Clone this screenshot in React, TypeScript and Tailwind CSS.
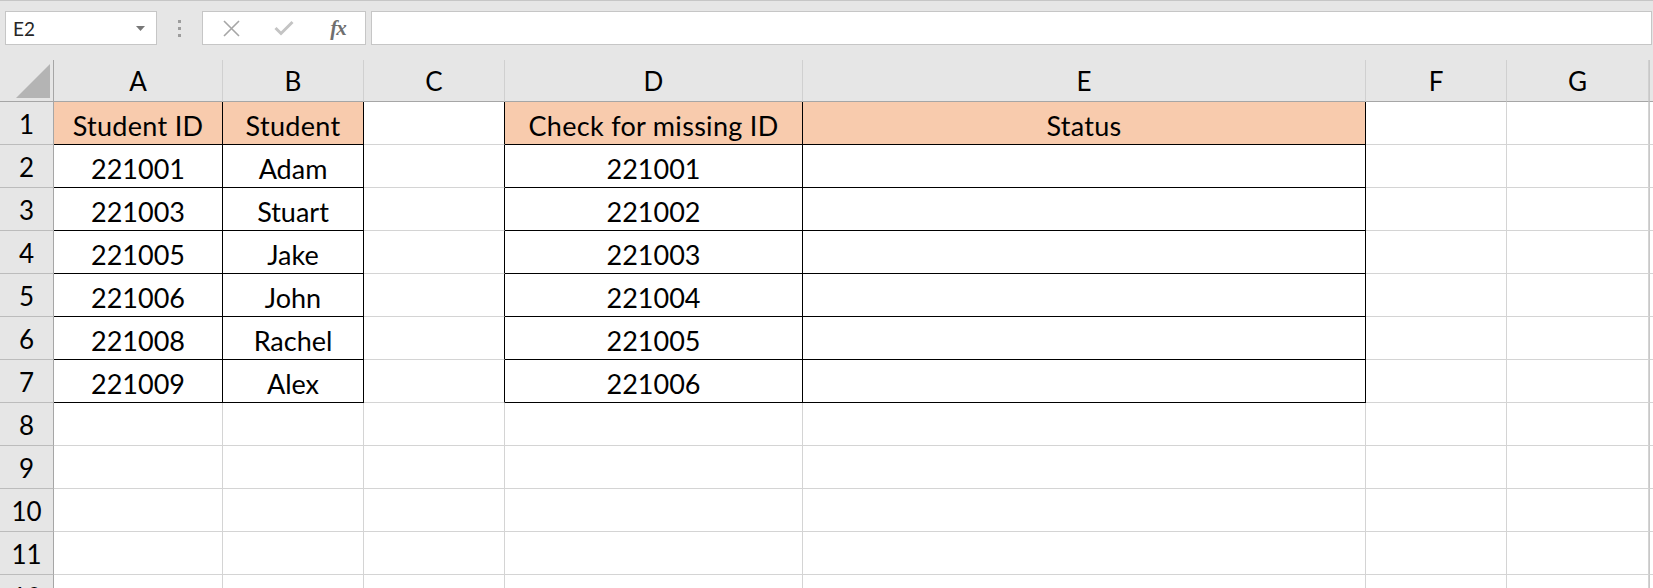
import React from 'react'

const COLS = ['A', 'B', 'C', 'D', 'E', 'F', 'G']
const ROWS = [1, 2, 3, 4, 5, 6, 7, 8, 9, 10, 11, 12]

const students: [string, string][] = [
  ['221001', 'Adam'],
  ['221003', 'Stuart'],
  ['221005', 'Jake'],
  ['221006', 'John'],
  ['221008', 'Rachel'],
  ['221009', 'Alex'],
]
const checkIds = ['221001', '221002', '221003', '221004', '221005', '221006']

function cellValue(col: string, row: number): string {
  if (row === 1) {
    if (col === 'A') return 'Student ID'
    if (col === 'B') return 'Student'
    if (col === 'D') return 'Check for missing ID'
    if (col === 'E') return 'Status'
    return ''
  }
  const i = row - 2
  if (i < 0 || i > 5) return ''
  if (col === 'A') return students[i][0]
  if (col === 'B') return students[i][1]
  if (col === 'D') return checkIds[i]
  return ''
}

function inTable(col: string, row: number) {
  return row >= 1 && row <= 7 && (col === 'A' || col === 'B' || col === 'D' || col === 'E')
}

function Toolbar() {
  return (
    <div className="h-[60px] bg-[#e6e6e6] border-t border-[#c6c6c6] flex items-start pt-[10px] pl-[5px] pr-[1px]">
      {/* name box */}
      <div className="w-[152px] h-[34px] bg-white border border-[#c6c6c6] flex items-center justify-between pl-[7px] pr-[11px]">
        <span className="text-[19px] text-[#262626] leading-none">E2</span>
        <svg width="9" height="5" viewBox="0 0 9 5">
          <path d="M0 0 L9 0 L4.5 5 Z" fill="#777" />
        </svg>
      </div>
      {/* dots */}
      <div className="w-[45px] h-[34px] flex flex-col items-center justify-center gap-[4px]">
        <div className="w-[3px] h-[3px] bg-[#9d9d9d]" />
        <div className="w-[3px] h-[3px] bg-[#9d9d9d]" />
        <div className="w-[3px] h-[3px] bg-[#9d9d9d]" />
      </div>
      {/* formula icons */}
      <div className="w-[164px] h-[34px] bg-white border border-[#c6c6c6] flex items-center">
        <div className="w-[54px] flex justify-center pl-[2px]">
          <svg width="17" height="17" viewBox="0 0 17 17">
            <path d="M1 1 L16 16 M16 1 L1 16" stroke="#a6a6a6" strokeWidth="1.6" />
          </svg>
        </div>
        <div className="w-[54px] flex justify-center">
          <svg width="20" height="16" viewBox="0 0 20 16">
            <path d="M1.5 8 L7 13.5 L18.5 2" stroke="#c4c4c4" strokeWidth="3" fill="none" />
          </svg>
        </div>
        <div className="w-[54px] flex justify-center">
          <span className="font-['Liberation_Serif',serif] italic font-bold text-[21px] text-[#6f6f6f] leading-none tracking-[-1px]">fx</span>
        </div>
      </div>
      {/* formula bar */}
      <div className="ml-[5px] flex-1 h-[34px] bg-white border border-[#c6c6c6]" />
    </div>
  )
}

export default function App() {
  return (
    <div className="w-[1653px] h-[588px] overflow-hidden bg-white font-['Lato',sans-serif] text-black">
      <Toolbar />
      <div className="grid grid-cols-[54px_169px_141px_141px_298px_563px_141px_142px_4px] grid-rows-[42px_repeat(12,43px)]">
        {/* corner */}
        <div className="bg-[#e6e6e6] border-r border-b border-[#a6a6a6] flex items-end justify-end pr-[3px] pb-[3px]">
          <svg width="34" height="34" viewBox="0 0 34 34">
            <path d="M34 0 L34 34 L0 34 Z" fill="#b4b4b4" />
          </svg>
        </div>
        {COLS.map(c => (
          <div
            key={c}
            className="bg-[#e6e6e6] border-r border-b border-r-[#d0d0d0] border-b-[#a6a6a6] flex items-center justify-center text-[26px] pt-[2px]"
          >
            {c}
          </div>
        ))}
        <div className="bg-[#e6e6e6] border-b border-b-[#a6a6a6] border-l border-l-[#c8c8c8]" />

        {ROWS.map(r => (
          <React.Fragment key={r}>
            <div className="bg-[#e6e6e6] border-r border-b border-r-[#a6a6a6] border-b-[#bcbcbc] flex items-center justify-center text-[26px] pt-[3px]">
              {r}
            </div>
            {COLS.map(c => {
              const t = inTable(c, r)
              const leftOfTable = c === 'C' && r <= 7
              const head = r === 1 && t
              return (
                <div
                  key={c}
                  className={
                    'border-r border-b flex items-center justify-center text-[27px] pt-[6px] whitespace-nowrap ' +
                    (t ? 'border-black ' : leftOfTable ? 'border-r-black border-b-[#d4d4d4] ' : 'border-[#d4d4d4] ') +
                    (head ? 'bg-[#f8cbad] tracking-[0.3px]' : 'bg-white')
                  }
                >
                  {cellValue(c, r)}
                </div>
              )
            })}
            <div className="bg-white border-l border-[#c8c8c8] border-b border-b-[#d4d4d4]" />
          </React.Fragment>
        ))}
      </div>
    </div>
  )
}
